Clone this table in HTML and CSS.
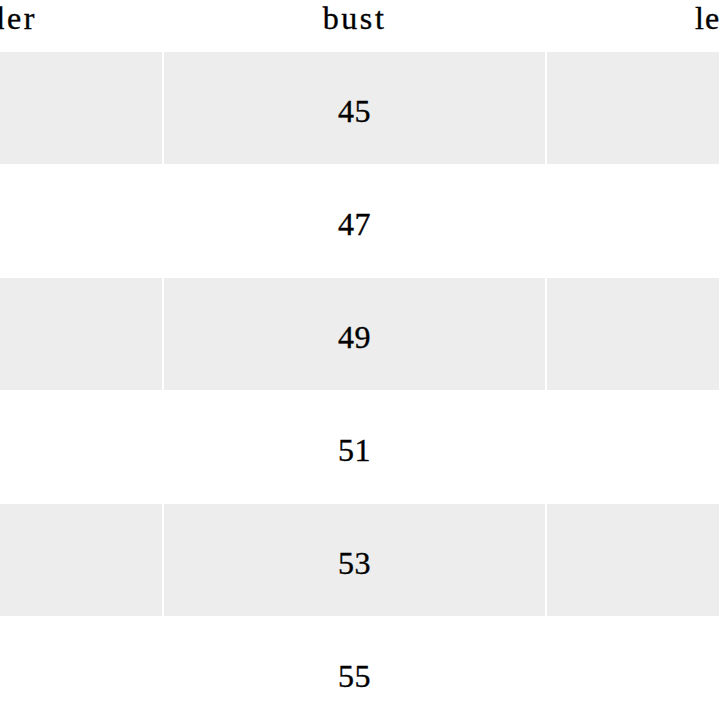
FILE: index.html
```html
<!DOCTYPE html>
<html lang="en">
<head>
<meta charset="utf-8">
<title>Size chart</title>
<link rel="stylesheet" href="styles.css">
</head>
<body>
<div class="viewport">
  <div class="size-table">
    <div class="cell head">shoulder</div>
    <div class="cell head">bust</div>
    <div class="cell head head-tight">length</div>

    <div class="cell grey"></div>
    <div class="cell grey">45</div>
    <div class="cell grey"></div>

    <div class="cell"></div>
    <div class="cell">47</div>
    <div class="cell"></div>

    <div class="cell grey"></div>
    <div class="cell grey">49</div>
    <div class="cell grey"></div>

    <div class="cell"></div>
    <div class="cell">51</div>
    <div class="cell"></div>

    <div class="cell grey"></div>
    <div class="cell grey">53</div>
    <div class="cell grey"></div>

    <div class="cell"></div>
    <div class="cell">55</div>
    <div class="cell"></div>
  </div>
</div>
</body>
</html>
```

FILE: styles.css
```css
html, body {
  margin: 0;
  padding: 0;
  background: #ffffff;
  overflow: hidden;
}

.viewport {
  width: 719px;
  height: 719px;
  overflow: hidden;
}

.size-table {
  display: grid;
  grid-template-columns: repeat(3, 383px);
  grid-template-rows: 52px;
  grid-auto-rows: 113px;
  margin-left: -219px;
  font-family: "Liberation Serif", "DejaVu Serif", serif;
  font-size: 32px;
  letter-spacing: 0.5px;
  color: #000000;
  -webkit-text-stroke: 0.35px #000000;
}

.cell {
  box-sizing: border-box;
  display: flex;
  align-items: center;
  justify-content: center;
  border-right: 2px solid #ffffff;
  border-bottom: 1px solid #ffffff;
  padding-top: 6px;
}

.cell.head {
  align-items: flex-start;
  padding-top: 0;
  letter-spacing: 2.6px;
}

.cell.head-tight {
  letter-spacing: 1.2px;
  padding-left: 2px;
}

.grey {
  background: #ecedec;
}
```
